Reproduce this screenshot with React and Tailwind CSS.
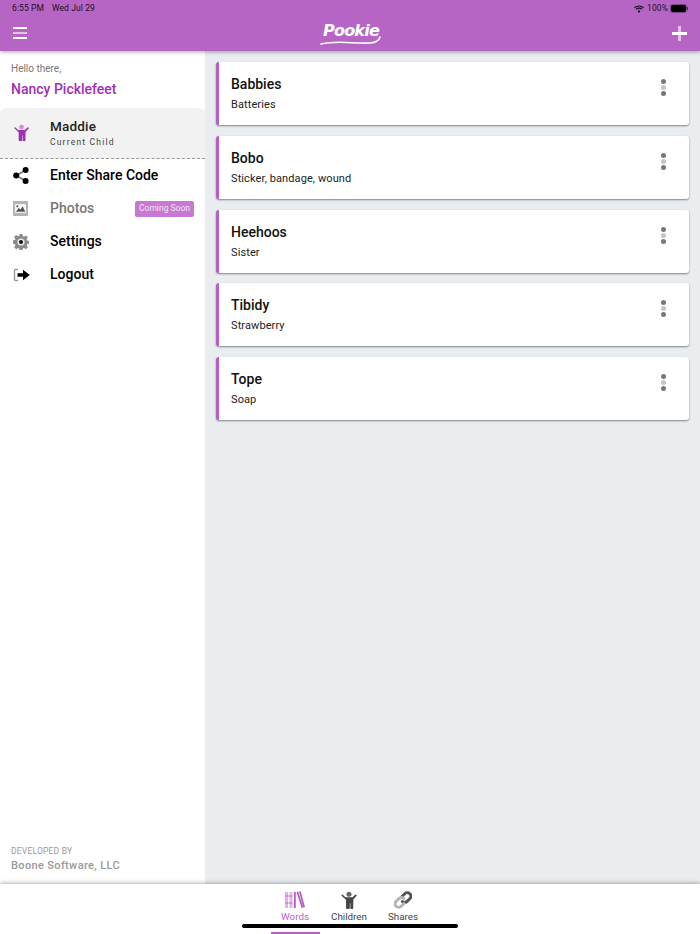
const words = [
  { title: 'Babbies', text: 'Batteries' },
  { title: 'Bobo', text: 'Sticker, bandage, wound' },
  { title: 'Heehoos', text: 'Sister' },
  { title: 'Tibidy', text: 'Strawberry' },
  { title: 'Tope', text: 'Soap' },
]

function ChildIcon({ className, headClass }) {
  return (
    <svg viewBox="0 0 20 20" className={className}>
      <circle cx="10" cy="3.600" r="2.800" className={headClass} fill="currentColor" />
      <path
        fill="currentColor"
        d="M1.200 4.800 2.800 3.800 6 7h8l3.200-3.200 1.600 1-4 4.600V12.500h-.1V19a1 1 0 0 1-1 1h-1.200a1 1 0 0 1-1-1v-5.500h-.6V19a1 1 0 0 1-1 1H7.700a1 1 0 0 1-1-1V9.600z"
      />
    </svg>
  )
}

function ShareIcon() {
  return (
    <svg viewBox="0 0 16 17" className="w-[16px] h-[17px]">
      <path d="M12.500 3 3.500 8.500l9 5.500" fill="none" stroke="#777" strokeWidth="1.600" />
      <circle cx="12.600" cy="3" r="3" fill="#000" />
      <circle cx="3.200" cy="8.500" r="3" fill="#000" />
      <circle cx="12.600" cy="14" r="3" fill="#000" />
    </svg>
  )
}

function PhotoIcon() {
  return (
    <svg viewBox="0 0 14 14" className="w-[15px] h-[15px]">
      <rect width="14" height="14" fill="#b5b5b5" />
      <rect x="2" y="3" width="10" height="8" fill="#fff" />
      <path d="M2.500 10 5.500 6.500 7 8l2-3 2.500 5z" fill="#555" />
      <circle cx="4" cy="5" r="1" fill="#555" />
    </svg>
  )
}

function GearIcon() {
  return (
    <svg viewBox="0 0 16 16" className="w-[16px] h-[16px]">
      <path
        fill="#8a8a8a"
        d="M6.600 0h2.800l.4 2.200 1.200.5 1.900-1.300 2 2-1.300 1.900.5 1.200 2 .4v2.800l-2 .4-.5 1.200 1.300 1.900-2 2-1.900-1.300-1.200.5-.4 2.200H6.600l-.4-2.200-1.200-.5-1.900 1.300-2-2 1.300-1.900-.5-1.200-1.900-.4V6.500l1.900-.4.5-1.200-1.300-1.900 2-2L5 2.300l1.200-.5z"
      />
      <circle cx="8" cy="8" r="3.600" fill="#e8e8e8" />
      <circle cx="8" cy="8" r="2" fill="#111" />
    </svg>
  )
}

function LogoutIcon() {
  return (
    <svg viewBox="0 0 17 14" className="w-[17px] h-[14px]">
      <path d="M5 1.500H2.500a1 1 0 0 0-1 1v9a1 1 0 0 0 1 1H5" fill="none" stroke="#9a9a9a" strokeWidth="1.400" />
      <path d="M4.500 5.300h5.500V1.800L16.800 7 10 12.200V8.700H4.500z" fill="#000" />
    </svg>
  )
}

function BooksIcon() {
  return (
    <svg viewBox="0 0 20 18" className="w-[20px] h-[18px]">
      <path fill="#e3b3e6" d="M0 1h3v16H0zM4.500 1h3v16h-3z" />
      <path fill="#b65fc4" d="M9 1h1.800v16H9zM11.500 1l1.700-.5 5 16-1.700.5zM14 .8l1.700-.5 4.300 15.700-1.700.5z" />
      <path stroke="#b65fc4" strokeWidth=".8" d="M0 5h7.500M0 12h7.500" />
    </svg>
  )
}

function LinkIcon() {
  return (
    <svg viewBox="0 0 18 18" className="w-[18px] h-[18px]" fill="none" strokeWidth="3" strokeLinecap="round">
      <path d="M8 5.500l2.800-2.800a3.500 3.500 0 0 1 5 5l-2.700 2.700a3.500 3.500 0 0 1-4.600.3" stroke="#555" />
      <path d="M10 12.500l-2.800 2.800a3.500 3.500 0 0 1-5-5l2.700-2.700a3.500 3.500 0 0 1 4.600-.3" stroke="#b5b5b5" />
    </svg>
  )
}

function MenuRow({ icon, label, muted, children }) {
  return (
    <div className="h-[33px] flex items-center">
      <div className="w-[50px] pl-[13px] flex items-center">{icon}</div>
      <span className={`text-[14px] font-medium ${muted ? 'text-[#777]' : 'text-black'}`}>{label}</span>
      {children}
    </div>
  )
}

function WordCard({ word }) {
  return (
    <div className="h-[63px] bg-white rounded-[3px] border-l-[3px] border-[#b65fc4] shadow-[0_1px_2px_rgba(0,0,0,0.45)] flex items-start justify-between pl-[12px] pr-[23px]">
      <div>
        <div className="mt-[12px] text-[14px] leading-[20px] font-medium text-[#111]">{word.title}</div>
        <div className="mt-[3px] text-[11px] leading-[16px] text-[#222] tracking-[0.1px]">{word.text}</div>
      </div>
      <div className="mt-[17px] flex flex-col gap-[1px]">
        <span className="w-[5px] h-[5px] rounded-full bg-[#777]" />
        <span className="w-[5px] h-[5px] rounded-full bg-[#c4c4c4]" />
        <span className="w-[5px] h-[5px] rounded-full bg-[#777]" />
      </div>
    </div>
  )
}

export default function App() {
  return (
    <div className="relative w-[700px] h-[934px] flex flex-col overflow-hidden bg-white font-['Roboto',sans-serif]">
      {/* Header */}
      <header className="relative z-10 h-[51px] shrink-0 bg-[#b765c4] shadow-[0_1px_4px_rgba(0,0,0,0.35)] flex flex-col">
        <div className="h-[17px] flex items-center justify-between pl-[12px] pr-[12px] text-[8.500px] text-[#1c0f20] tracking-[0.1px]">
          <div className="flex gap-[8px]">
            <span>6:55 PM</span>
            <span>Wed Jul 29</span>
          </div>
          <div className="flex items-center gap-[3px]">
            <svg viewBox="0 0 12 9" className="w-[10px] h-[8px]">
              <path d="M.5 3a8 8 0 0 1 11 0M2.300 5a5.200 5.200 0 0 1 7.400 0" fill="none" stroke="#111" strokeWidth="1.300" />
              <circle cx="6" cy="7.400" r="1.400" fill="#111" />
            </svg>
            <span>100%</span>
            <div className="flex items-center">
              <div className="w-[15px] h-[7px] rounded-[2px] bg-black ring-1 ring-[#7a4486]" />
              <div className="ml-[1px] w-[1px] h-[3px] bg-[#4a2a50]" />
            </div>
          </div>
        </div>
        <div className="relative flex-1 flex items-center justify-between pl-[13px] pr-[13px]">
          <div className="flex flex-col gap-[3px] mb-[2px]">
            <span className="w-[14px] h-[2px] bg-white" />
            <span className="w-[14px] h-[2px] bg-[#e2c1e8]" />
            <span className="w-[14px] h-[2px] bg-white" />
          </div>
          <div className="absolute left-[320px] top-[4px] w-[62px] h-[26px]">
            <div className="text-center text-[16px] leading-[20px] font-bold italic text-white font-['DejaVu_Sans',sans-serif] tracking-[-0.8px]">Pookie</div>
            <svg viewBox="0 0 62 10" className="absolute left-0 top-[14px] w-[62px] h-[10px]">
              <path d="M1 9C18 5 34 9 50 8c6-.5 9-2 10-6" fill="none" stroke="#fff" strokeWidth="1.600" strokeLinecap="round" />
            </svg>
          </div>
          <div className="relative w-[15px] h-[15px] mb-[2px]">
            <span className="absolute left-[6px] top-0 w-[3px] h-[15px] bg-[#e2c1e8]" />
            <span className="absolute left-0 top-[6px] w-[15px] h-[3px] bg-white" />
          </div>
        </div>
      </header>

      {/* Body */}
      <div className="flex-1 flex min-h-0">
        <aside className="w-[205px] shrink-0 bg-white flex flex-col shadow-[1px_0_1px_rgba(0,0,0,0.05)]">
          <div className="pl-[11px] pt-[11px] h-[57px]">
            <div className="text-[10px] leading-[14px] text-[#777]">Hello there,</div>
            <div className="mt-[4px] text-[14px] leading-[18px] font-medium text-[#a02fb5]">Nancy Picklefeet</div>
          </div>
          <div className="h-[51px] bg-[#f2f2f2] rounded-t-[6px] border-b border-dashed border-[#999] flex items-center">
            <div className="w-[50px] pl-[13px] mb-[2px]">
              <ChildIcon className="w-[17px] h-[17px] text-[#a02fb5]" headClass="text-[#cf8fd9]" />
            </div>
            <div className="mb-[2px]">
              <div className="text-[13.500px] leading-[18px] font-medium text-[#222] tracking-[0.2px]">Maddie</div>
              <div className="mt-[1px] text-[8.500px] leading-[12px] text-[#444] tracking-[1.200px]">Current Child</div>
            </div>
          </div>
          <MenuRow icon={<ShareIcon />} label="Enter Share Code" />
          <MenuRow icon={<PhotoIcon />} label="Photos" muted>
            <span className="ml-auto mr-[11px] h-[16px] w-[59px] rounded-[2px] bg-[#c678d2] text-[#f5e3f7] text-[8.500px] flex items-center justify-center">
              Coming Soon
            </span>
          </MenuRow>
          <MenuRow icon={<GearIcon />} label="Settings" />
          <MenuRow icon={<LogoutIcon />} label="Logout" />
          <div className="mt-auto pl-[11px] pb-[10px]">
            <div className="text-[8.500px] leading-[12px] text-[#999] tracking-[0.2px]">DEVELOPED BY</div>
            <div className="mt-[1px] text-[11px] leading-[16px] font-medium text-[#999] tracking-[0.35px]">Boone Software, LLC</div>
          </div>
        </aside>

        <main className="flex-1 bg-[#e9edf0] pl-[11px] pr-[11px] pt-[11px] flex flex-col gap-[10.750px]">
          {words.map((word) => (
            <WordCard key={word.title} word={word} />
          ))}
        </main>
      </div>

      {/* Tab bar */}
      <nav className="relative h-[50px] shrink-0 bg-white shadow-[0_-1px_4px_rgba(0,0,0,0.3)] flex justify-center pr-[2px]">
        <div className="w-[54px] flex flex-col items-center pt-[7px]">
          <BooksIcon />
          <span className="mt-[1px] text-[9.800px] leading-[14px] text-[#b65fc4]">Words</span>
        </div>
        <div className="w-[54px] flex flex-col items-center pt-[7px]">
          <ChildIcon className="w-[18px] h-[18px] text-[#444]" headClass="text-[#666]" />
          <span className="mt-[1px] text-[9.800px] leading-[14px] text-[#444]">Children</span>
        </div>
        <div className="w-[54px] flex flex-col items-center pt-[7px]">
          <LinkIcon />
          <span className="mt-[1px] text-[9.800px] leading-[14px] text-[#444]">Shares</span>
        </div>
        <span className="absolute left-[242px] top-[40px] w-[216px] h-[4px] rounded-full bg-black" />
        <span className="absolute left-[271px] top-[48px] w-[49px] h-[2px] bg-[#b65fc4]" />
      </nav>
    </div>
  )
}
